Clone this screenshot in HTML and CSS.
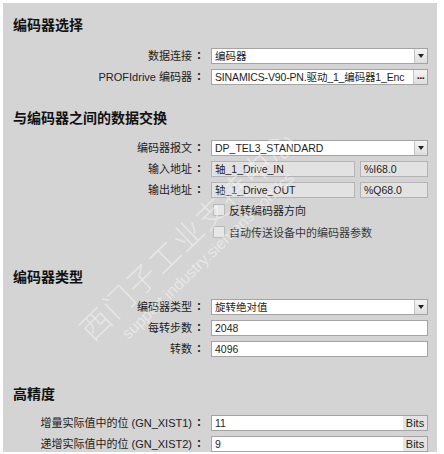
FILE: index.html
```html
<!DOCTYPE html>
<html lang="zh-CN">
  <head>
    <meta charset="UTF-8" />
    <meta name="viewport" content="width=device-width, initial-scale=1.0" />
    <title>编码器设置</title>
    <link rel="stylesheet" href="styles.css">
  </head>
  <body>
    <div class="panel">
      <!-- 编码器选择 -->
      <div class="section first">
        <h2>编码器选择</h2>
        <div class="form-row">
          <label>数据连接<span class="colon">：</span></label>
          <div class="field">
            <span class="value">编码器</span>
            <span class="drop"></span>
          </div>
        </div>
        <div class="form-row">
          <label>PROFIdrive 编码器<span class="colon">：</span></label>
          <div class="field">
            <span class="value large">SINAMICS-V90-PN.驱动_1_编码器1_Enc</span>
            <span class="more">...</span>
          </div>
        </div>
      </div>

      <!-- 与编码器之间的数据交换 -->
      <div class="section">
        <h2>与编码器之间的数据交换</h2>
        <div class="form-row">
          <label>编码器报文<span class="colon">：</span></label>
          <div class="field">
            <span class="value">DP_TEL3_STANDARD</span>
            <span class="drop"></span>
          </div>
        </div>
        <div class="form-row">
          <label>输入地址<span class="colon">：</span></label>
          <div class="pair">
            <div class="field disabled"><span class="value">轴_1_Drive_IN</span></div>
            <div class="field disabled"><span class="value">%I68.0</span></div>
          </div>
        </div>
        <div class="form-row">
          <label>输出地址<span class="colon">：</span></label>
          <div class="pair">
            <div class="field disabled"><span class="value">轴_1_Drive_OUT</span></div>
            <div class="field disabled"><span class="value">%Q68.0</span></div>
          </div>
        </div>
        <div class="check-row">
          <span class="box"></span>
          <span>反转编码器方向</span>
        </div>
        <div class="check-row">
          <span class="box"></span>
          <span class="faded">自动传送设备中的编码器参数</span>
        </div>
      </div>

      <!-- 编码器类型 -->
      <div class="section">
        <h2>编码器类型</h2>
        <div class="form-row">
          <label>编码器类型<span class="colon">：</span></label>
          <div class="field">
            <span class="value">旋转绝对值</span>
            <span class="drop"></span>
          </div>
        </div>
        <div class="form-row">
          <label>每转步数<span class="colon">：</span></label>
          <div class="field"><span class="value">2048</span></div>
        </div>
        <div class="form-row">
          <label>转数<span class="colon">：</span></label>
          <div class="field"><span class="value">4096</span></div>
        </div>
      </div>

      <!-- 高精度 -->
      <div class="section last">
        <h2>高精度</h2>
        <div class="form-row">
          <label>增量实际值中的位 (GN_XIST1)<span class="colon">：</span></label>
          <div class="field">
            <span class="value">11</span>
            <span class="unit">Bits</span>
          </div>
        </div>
        <div class="form-row">
          <label>递增实际值中的位 (GN_XIST2)<span class="colon">：</span></label>
          <div class="field">
            <span class="value">9</span>
            <span class="unit">Bits</span>
          </div>
        </div>
      </div>

      <!-- watermark -->
      <div class="mark mark-big">西门子工业支持中心</div>
      <div class="mark mark-small">support.industry.siemens.com/cs</div>
    </div>
  </body>
</html>
```

FILE: styles.css
```css
body {
  margin: 0;
  background-color: #fff;
  font-family: "Liberation Sans", "Noto Sans CJK SC", sans-serif;
  color: #1e1e1e;
}
.panel {
  position: relative;
  overflow: hidden;
  margin: 3px 7px 0 3px;
  height: 449px;
  padding: 12px 9px 0 0;
  box-sizing: border-box;
  background-color: #d4d4d4;
}
h2 {
  margin: 0 0 11px 10px;
  height: 20px;
  line-height: 20px;
  font-size: 14px;
  font-weight: bold;
  color: #111;
}
.section {
  margin-top: 24px;
}
.section.first {
  margin-top: 0;
}
.section.first h2 {
  margin-bottom: 12px;
}
.section.last {
  margin-top: 28px;
}
.section.last h2 {
  margin-bottom: 10px;
}
.form-row {
  display: grid;
  grid-template-columns: 202px 1fr;
  column-gap: 6px;
  align-items: center;
  height: 16px;
  margin-bottom: 5px;
}
.form-row label {
  text-align: right;
  font-size: 11px;
  line-height: 16px;
  white-space: nowrap;
  color: #222;
}
.colon {
  display: inline-block;
  width: 12px;
  text-align: center;
  font-family: "Noto Sans CJK TC", sans-serif;
  font-weight: bold;
  margin-left: 1px;
}
.field {
  display: flex;
  align-items: stretch;
  height: 16px;
  box-sizing: border-box;
  border: 1px solid #a4a4a4;
  background-color: #fff;
  overflow: hidden;
}
.field.disabled {
  background-color: #e2e2e2;
  border-color: #b4b4b4;
}
.value {
  flex: 1;
  padding-left: 3px;
  font-size: 10.5px;
  line-height: 14px;
  white-space: nowrap;
  overflow: hidden;
}
.value.large {
  letter-spacing: -0.15px;
}
.pair {
  display: grid;
  grid-template-columns: 1fr 68px;
  column-gap: 5px;
}
.drop,
.more {
  width: 12px;
  border-left: 1px solid #c4c4c4;
  background: linear-gradient(#f4f4f4, #dedede);
  position: relative;
}
.drop::after {
  content: "";
  position: absolute;
  left: 3px;
  top: 5px;
  border-left: 3px solid transparent;
  border-right: 3px solid transparent;
  border-top: 4px solid #222;
}
.more {
  width: 13px;
  font-size: 11px;
  line-height: 10px;
  text-align: center;
  font-weight: bold;
  color: #222;
  letter-spacing: -0.5px;
}
.unit {
  width: 24px;
  background-color: #e4e4e4;
  font-size: 11px;
  line-height: 14px;
  text-align: center;
  color: #222;
}
.check-row {
  display: flex;
  align-items: center;
  gap: 4px;
  height: 22px;
  padding-left: 210px;
  font-size: 11px;
  color: #222;
}
.form-row + .check-row {
  margin-top: -3px;
}
.box {
  width: 10px;
  height: 10px;
  border: 1px solid #b9b9b9;
  border-radius: 1px;
  background-color: #e7e7e7;
}
.faded {
  color: #3a3a3a;
}
.mark {
  position: absolute;
  white-space: nowrap;
  color: rgba(255, 255, 255, 0.45);
  transform-origin: left bottom;
  transform: rotate(-44deg);
  pointer-events: none;
}
.mark-big {
  left: 96px;
  top: 302px;
  font-size: 30px;
  font-family: "Noto Sans CJK SC", sans-serif;
  font-weight: 300;
  letter-spacing: 2px;
}
.mark-small {
  left: 128px;
  top: 322px;
  font-size: 16px;
  font-family: "Liberation Sans", sans-serif;
}
```
